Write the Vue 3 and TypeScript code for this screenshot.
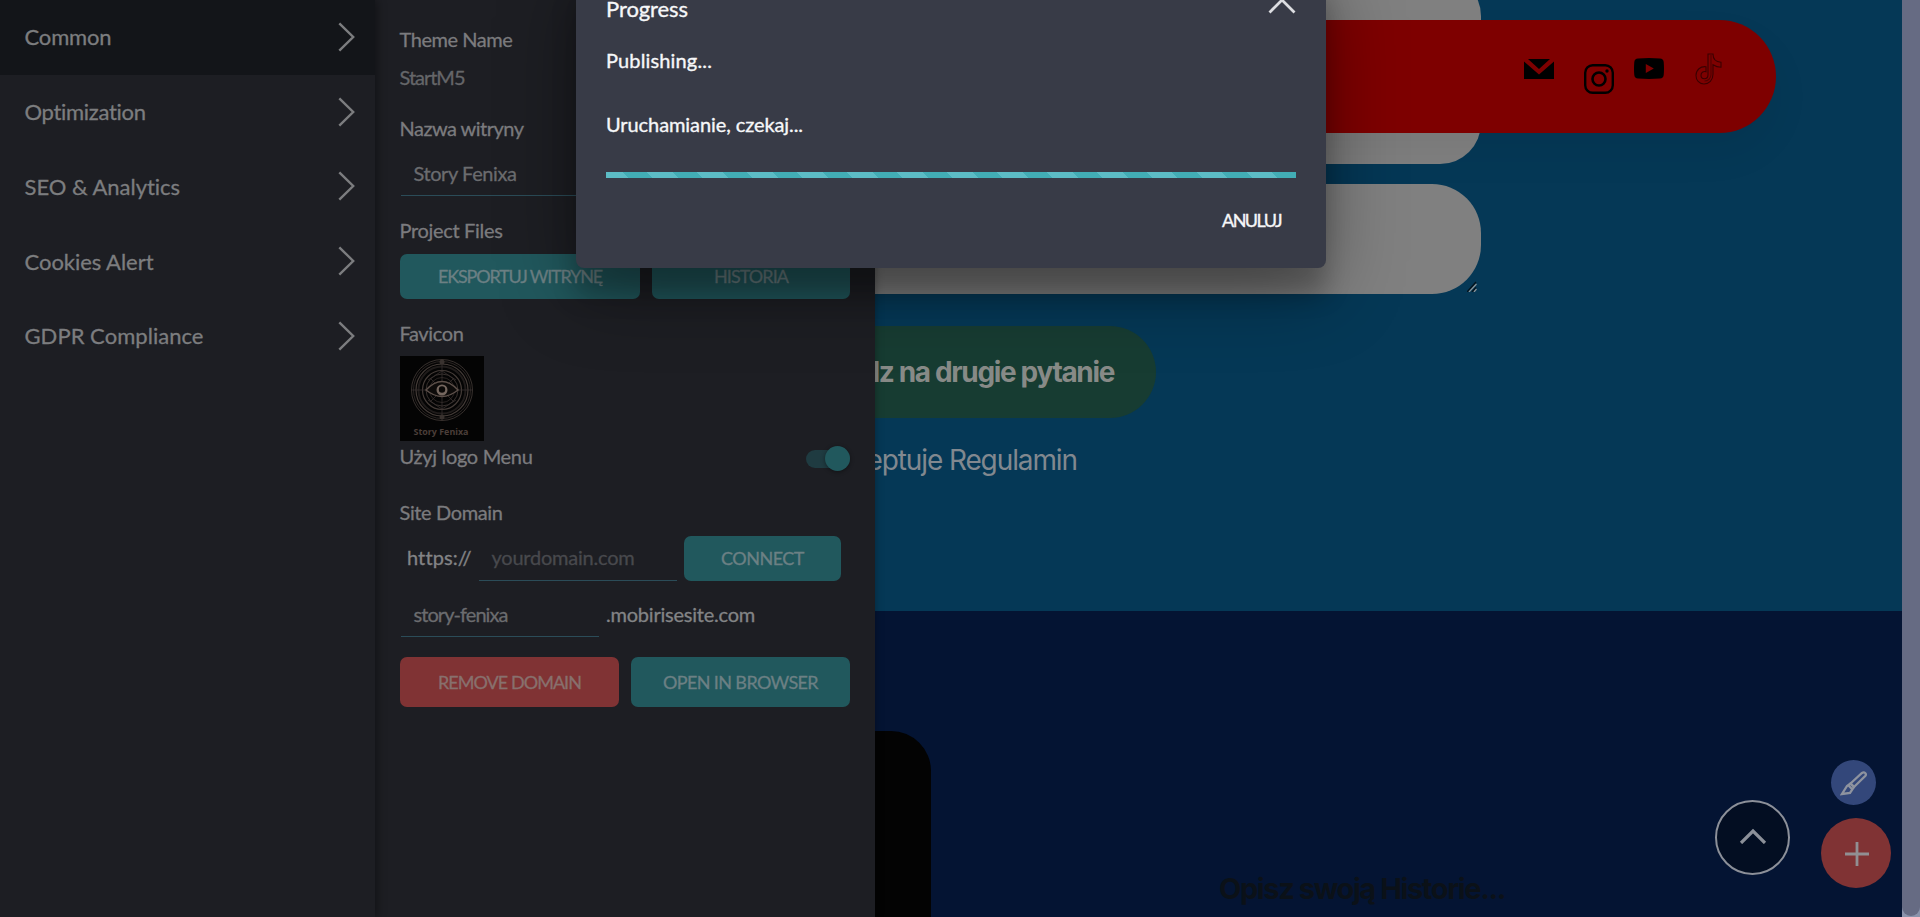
<script setup lang="ts">
import type { Directive } from 'vue'

interface MenuItem {
  label: string
  width: number
  active?: boolean
}

const menu: MenuItem[] = [
  { label: 'Common', width: 87, active: true },
  { label: 'Optimization', width: 122 },
  { label: 'SEO & Analytics', width: 156 },
  { label: 'Cookies Alert', width: 129 },
  { label: 'GDPR Compliance', width: 179 },
]

/* Tracks a label out (or in) so that it takes the given width in pixels. */
const vFit: Directive<HTMLElement, number> = {
  mounted(el, binding) {
    const natural = el.getBoundingClientRect().width
    const count = (el.textContent ?? '').trim().length
    el.style.letterSpacing = `${(binding.value - natural) / count}px`
  },
}
</script>

<template>
  <div class="app">
    <main class="site">
      <section class="form">
        <div class="field first"></div>
        <div class="field second">
          <svg class="grip" viewBox="0 0 10 11"><path d="M0 11 9 1M5 11l4-4.5" stroke="#04131c" stroke-width="1.4" /><path d="M2 11 9.5 3M7 11l2.5-3" stroke="#8c9498" stroke-width="1.2" /></svg>
        </div>
        <div class="next">Przejdz na drugie pytanie</div>
        <div class="terms">Akceptuje Regulamin</div>
      </section>
      <section class="story">
        <div class="card"></div>
        <h2><span v-fit="286">Opisz swoją Historie...</span></h2>
      </section>
      <nav class="topbar">
        <svg class="mail" viewBox="0 0 30 20"><path d="M0 2.500 15 15.500 30 2.500V20H0zM4 0h22L15 10z" /></svg>
        <svg class="insta" viewBox="0 0 30 30" fill="none" stroke="#000"><rect x="1.200" y="1.200" width="27.600" height="27.600" rx="7.500" stroke-width="2.400" /><circle cx="15" cy="15" r="6.500" stroke-width="2.600" /><circle cx="23" cy="7" r="1.700" fill="#000" stroke="none" /></svg>
        <svg class="tube" viewBox="0 0 30 21"><path fill-rule="evenodd" d="M4 .4Q15-.4 26 .4q3.400.2 3.700 3.600.6 6.500 0 13-.3 3.400-3.700 3.600-11 .8-22 0Q.6 20.400.3 17q-.6-6.500 0-13Q.6.6 4 .4zM11.800 6v9l8-4.500z" /></svg>
        <svg class="tiktok" viewBox="0 0 28 32" fill="none" stroke="#3a0000" stroke-width="1.100"><path d="M13 1h5c0 5 3 8 8 8.300v5c-3 0-5.600-.9-8-2.500v9.500c0 6-4 9.700-9 9.700-5 0-8-4-8-8.500 0-5.500 4.500-9.500 10-8.800v5c-3-.7-5 1-5 3.600 0 2 1.500 3.500 3.300 3.500 2.300 0 3.700-1.600 3.700-4z" /><path d="M16 2v19.500c0 4-3 6.500-6.500 6.500" stroke="#510000" /></svg>
      </nav>
      <div class="to-top"><svg viewBox="0 0 28 16"><path d="M2 15 14 3 26 15" fill="none" stroke="#8c9099" stroke-width="3.200" /></svg></div>
      <div class="brush">
        <svg viewBox="0 0 28 26" fill="none" stroke="#8e939f" stroke-width="2.300"><path d="M10.500 13.500 22 3c2.400-1.800 5 .8 3.200 3L14 17z" /><path d="M10.500 13.500 7 16 2 24l8-1 4-6zM8.500 15.500l4 4" /></svg>
      </div>
      <div class="add"><svg viewBox="0 0 24 24"><path d="M12 0v24M0 12h24" stroke="#918f92" stroke-width="2.800" /></svg></div>
    </main>

    <aside class="panels">
      <ul class="menu">
        <li v-for="item in menu" :key="item.label" :class="{ active: item.active }">
          <span v-fit="item.width">{{ item.label }}</span>
          <svg viewBox="0 0 17 30"><path d="M1.300 1.300 15.200 15 1.300 28.700" fill="none" stroke="#7c7d7f" stroke-width="2.400" /></svg>
        </li>
      </ul>

      <div class="settings">
        <div class="line theme-label"><span v-fit="113">Theme Name</span></div>
        <div class="line muted theme-value"><span v-fit="65">StartM5</span></div>
        <div class="line name-label"><span v-fit="124">Nazwa witryny</span></div>
        <div class="input name-input"><span v-fit="103">Story Fenixa</span></div>
        <div class="line files-label"><span v-fit="103">Project Files</span></div>
        <div class="row files-row">
          <button class="btn export"><span v-fit="164">EKSPORTUJ WITRYNĘ</span></button>
          <button class="btn history"><span v-fit="74">HISTORIA</span></button>
        </div>
        <div class="line favicon-label"><span v-fit="64">Favicon</span></div>
        <svg class="favicon" viewBox="0 0 84 85">
          <rect width="84" height="85" fill="#040404" />
          <g fill="none" stroke="#453c38" stroke-width=".8">
            <circle cx="42" cy="34" r="30.500" />
            <circle cx="42" cy="34" r="28.500" stroke="#332c2a" />
            <circle cx="42" cy="34" r="26" stroke-width="1.200" />
            <circle cx="42" cy="34" r="23.500" stroke="#1f1b1a" stroke-width="2" />
            <circle cx="42" cy="34" r="19.500" stroke-width="1.200" />
            <circle cx="42" cy="34" r="16" />
            <circle cx="42" cy="34" r="12.500" stroke="#332c2a" />
            <path d="M42 4v60M12 34h60M28 24l14-9 14 9M28 44l14 9 14-9M30 22l24 24M54 22 30 46" stroke="#383130" />
            <path d="M26 34q16-17 32 0-16 13-32 0z" fill="#0d0b0a" stroke="#5d504a" stroke-width="1.300" />
          </g>
          <circle cx="42" cy="34" r="5.500" fill="#75675f" />
          <circle cx="42" cy="33.500" r="3.200" fill="#0b0908" />
          <circle cx="42" cy="6" r="2.500" fill="#39322f" />
          <circle cx="42" cy="61" r="2.500" fill="#39322f" />
          <text x="13.500" y="79" textLength="55" lengthAdjust="spacingAndGlyphs">Story Fenixa</text>
        </svg>
        <div class="logo-row">
          <span class="line"><span v-fit="133">Użyj logo Menu</span></span>
          <span class="toggle"><i></i></span>
        </div>
        <div class="line domain-label"><span v-fit="103">Site Domain</span></div>
        <div class="row domain-row">
          <span class="text"><span v-fit="64">https://</span></span>
          <div class="input placeholder"><span v-fit="143">yourdomain.com</span></div>
          <button class="btn connect"><span v-fit="83">CONNECT</span></button>
        </div>
        <div class="row sub-row">
          <div class="input"><span v-fit="94">story-fenixa</span></div>
          <span class="text"><span v-fit="149">.mobirisesite.com</span></span>
        </div>
        <div class="row action-row">
          <button class="btn danger"><span v-fit="143">REMOVE DOMAIN</span></button>
          <button class="btn"><span v-fit="155">OPEN IN BROWSER</span></button>
        </div>
      </div>
    </aside>

    <section class="dialog">
      <header>
        <span v-fit="82">Progress</span>
        <svg viewBox="0 0 28 16"><path d="M1.500 14.500 14 2 26.500 14.500" fill="none" stroke="#dcdde1" stroke-width="2.800" /></svg>
      </header>
      <p class="status"><span v-fit="106">Publishing...</span></p>
      <p class="wait"><span v-fit="197">Uruchamianie, czekaj...</span></p>
      <div class="progress"></div>
      <footer><span v-fit="59">ANULUJ</span></footer>
    </section>

    <div class="scrollbar"><i></i></div>
  </div>
</template>

<style>
body {
  overflow: hidden;
}
</style>

<style scoped>
* {
  box-sizing: border-box;
}
.app {
  position: relative;
  width: 1920px;
  height: 917px;
  overflow: hidden;
  font-family: Lato, "Open Sans", sans-serif;
  background: #041433;
}
svg {
  display: block;
  flex: none;
}
span {
  white-space: nowrap;
}

/* website preview */
.site {
  font-family: Inter, sans-serif;
}
.form {
  display: flex;
  flex-direction: column;
  align-items: flex-start;
  height: 611px;
  padding-left: 620px;
  overflow: hidden;
  background: #053856;
}
.field {
  position: relative;
  flex: none;
  width: 861px;
  background: #808080;
}
.first {
  height: 189px;
  margin-top: -25px;
  border-radius: 41px;
}
.second {
  height: 110px;
  margin-top: 20px;
  border-radius: 49px;
}
.grip {
  position: absolute;
  right: 4px;
  bottom: 2px;
  width: 10px;
  height: 11px;
}
.next {
  width: 536px;
  height: 92px;
  margin-top: 32px;
  padding-right: 42px;
  border-radius: 46px;
  background: #173c32;
  color: #878a87;
  font-size: 28px;
  font-weight: 700;
  line-height: 92px;
  letter-spacing: -1.35px;
  text-align: right;
}
.terms {
  width: 457px;
  margin-top: 24px;
  color: #81888f;
  font-size: 28px;
  line-height: 36px;
  letter-spacing: -1.1px;
  text-align: right;
}
.story {
  display: flex;
  height: 306px;
  overflow: hidden;
  background: #041433;
}
.card {
  width: 331px;
  height: 300px;
  margin: 120px 288px 0 600px;
  border-radius: 40px;
  background: #030303;
}
.story h2 {
  margin: 260px 0 0;
  color: #0b1118;
  font-size: 29px;
  font-weight: 700;
  line-height: 35px;
}
.topbar {
  position: absolute;
  top: 20px;
  left: 700px;
  display: flex;
  align-items: flex-start;
  width: 1076px;
  height: 113px;
  padding-left: 824px;
  border-radius: 57px;
  background: #7e0000;
  box-shadow: 0 20px 40px rgba(0, 0, 0, 0.06);
}
.mail {
  width: 30px;
  height: 20px;
  margin-top: 39px;
}
.insta {
  width: 30px;
  height: 30px;
  margin: 44px 0 0 30px;
}
.tube {
  width: 30px;
  height: 21px;
  margin: 38px 0 0 20px;
}
.tiktok {
  width: 28px;
  height: 32px;
  margin: 33px 0 0 31px;
}
.to-top,
.brush,
.add {
  position: absolute;
  display: flex;
  align-items: center;
  justify-content: center;
  border-radius: 50%;
}
.to-top {
  left: 1715px;
  top: 800px;
  width: 75px;
  height: 75px;
  border: 2px solid #8c9099;
  background: #030e22;
}
.to-top svg {
  width: 28px;
  height: 16px;
  margin-top: -3px;
}
.brush {
  left: 1831px;
  top: 760px;
  width: 45px;
  height: 45px;
  background: #33477a;
}
.brush svg {
  width: 28px;
  height: 26px;
}
.add {
  left: 1821px;
  top: 818px;
  width: 70px;
  height: 70px;
  background: #803334;
}
.add svg {
  width: 24px;
  height: 24px;
  margin: 1px 0 0 1px;
}

/* settings side panels */
.panels {
  position: absolute;
  inset: 0 auto 0 0;
  display: flex;
  width: 875px;
  background: #1d1e23;
  box-shadow: 0 0 8px rgba(0, 0, 0, 0.35);
  -webkit-text-stroke: 0.3px currentColor;
}
.menu {
  width: 375px;
  margin: 0;
  padding: 0;
  list-style: none;
  box-shadow: 2px 0 9px rgba(0, 0, 0, 0.4);
}
.menu li {
  display: flex;
  align-items: center;
  justify-content: space-between;
  height: 74.750px;
  padding: 0 20px 1px 25px;
  color: #7c7d7f;
  font-size: 22px;
}
.menu li.active {
  background: #131519;
}
.menu span {
  margin-left: -0.5px;
}
.menu svg {
  width: 17px;
  height: 30px;
}
.settings {
  display: flex;
  flex-direction: column;
  align-items: flex-start;
  width: 500px;
  padding: 29px 25px 0;
  color: #7b7b7e;
  font-size: 20px;
}
.line {
  margin-left: -0.5px;
  line-height: 20px;
}
.muted {
  color: #656669;
}
.theme-value {
  margin-top: 18px;
}
.name-label {
  margin-top: 31px;
}
.input {
  height: 46px;
  padding-left: 12.5px;
  border-bottom: 1px solid #2b4c58;
  color: #6b6c6f;
  line-height: 47px;
}
.name-input {
  width: 449px;
  margin: 12px 0 0 1px;
}
.files-label {
  margin-top: 24px;
}
.row {
  display: flex;
}
.btn {
  display: flex;
  align-items: center;
  justify-content: center;
  width: 219px;
  height: 50px;
  padding: 0 0 1px;
  border: 0;
  border-radius: 7px;
  background: #21585d;
  color: #6c8084;
  font: 18px Lato, sans-serif;
}
.files-row {
  gap: 12px;
  margin-top: 14px;
}
.files-row .btn,
.connect {
  height: 45px;
  padding-bottom: 2px;
}
.files-row .export {
  width: 240px;
}
.files-row .history {
  width: 198px;
}
.favicon-label {
  margin-top: 24px;
}
.favicon {
  width: 84px;
  height: 85px;
  margin-top: 13px;
}
.favicon text {
  fill: #4b3e39;
  font: 700 9px "Open Sans", sans-serif;
  -webkit-text-stroke: 0;
}
.logo-row {
  display: flex;
  align-items: center;
  justify-content: space-between;
  width: 450px;
  height: 25px;
  margin-top: 5px;
}
.logo-row .line {
  margin-top: -6px;
}
.toggle {
  display: flex;
  align-items: center;
  justify-content: flex-end;
  width: 44px;
  height: 18px;
  border-radius: 9px;
  background: #1f3b41;
}
.toggle i {
  width: 25px;
  height: 25px;
  border-radius: 50%;
  background: #21585d;
  box-shadow: 0 1px 4px rgba(0, 0, 0, 0.4);
}
.domain-label {
  margin-top: 31px;
}
.domain-row {
  align-items: center;
  margin-top: 12px;
  padding-left: 7px;
}
.text {
  color: #838486;
  line-height: 47px;
}
.domain-row .text {
  width: 72px;
}
.domain-row .input,
.sub-row .input {
  width: 198px;
}
.domain-row .input {
  line-height: 45px;
}
.placeholder {
  color: #48494d;
}
.connect {
  width: 157px;
  margin: 2px 0 0 7px;
}
.sub-row {
  height: 46px;
  margin: 10px 0 0 1px;
}
.sub-row .text {
  margin-left: 7px;
}
.action-row {
  gap: 12px;
  margin-top: 20px;
}
.danger {
  background: #803334;
  color: #88706d;
}

/* publishing dialog */
.dialog {
  position: absolute;
  top: -30px;
  left: 576px;
  width: 750px;
  height: 298px;
  padding: 28px 30px 0;
  border-radius: 8px;
  background: #383b47;
  color: #f6f7f9;
  font-size: 20px;
  box-shadow: 0 27px 24px rgba(0, 0, 0, 0.22), 0 20px 77px rgba(0, 0, 0, 0.38);
  -webkit-text-stroke: 0.35px currentColor;
}
.dialog header {
  display: flex;
  align-items: flex-start;
  justify-content: space-between;
  height: 23px;
  font-size: 22px;
  line-height: 22px;
}
.dialog header svg {
  width: 28px;
  height: 16px;
}
.dialog p {
  margin: 0;
  line-height: 20px;
}
.status {
  padding-top: 29px;
}
.wait {
  padding-top: 44px;
}
.progress {
  height: 6px;
  margin-top: 38px;
  background: repeating-linear-gradient(45deg, #5cbcc5 0 15.560px, #42adb5 15.560px 33.230px, #5cbcc5 33.230px 35.355px);
}
.dialog footer {
  display: flex;
  justify-content: flex-end;
  margin-top: 33px;
  padding-right: 15px;
  font-size: 18px;
  line-height: 18px;
}

.scrollbar {
  position: absolute;
  inset: 0 0 0 auto;
  width: 18px;
  background: #8a93ab;
}
.scrollbar i {
  display: block;
  height: 916px;
  border-radius: 0 0 9px 9px;
  background: #666b83;
}
</style>
